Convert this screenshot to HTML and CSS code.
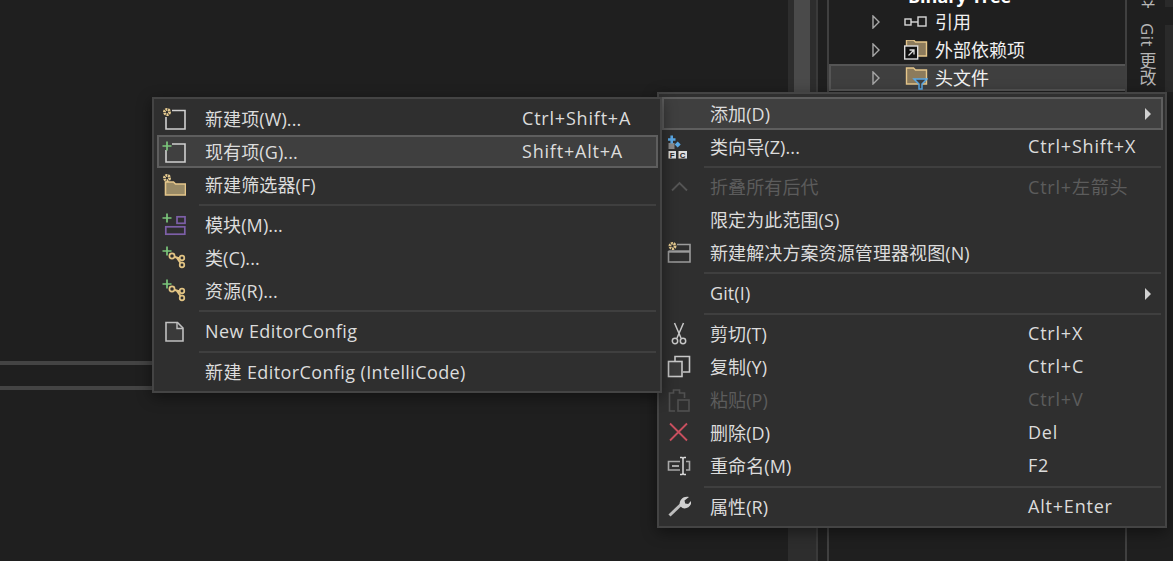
FILE: index.html
```html
<!DOCTYPE html>
<html lang="zh-CN">
<head>
<meta charset="utf-8">
<title>Menu</title>
<link rel="stylesheet" href="styles.css">
</head>
<body>
<div class="desk">
  <div class="editor"><div class="rule r1"></div><div class="rule r2"></div></div>
  <div class="scroll"><div class="thumb"></div></div>
  <div class="gutter"></div>
  <div class="tree">
    <div class="row top"><span class="tbox"></span><b>Binary Tree</b></div>
    <div class="row"><svg class="tw" viewBox="0 0 8 14"><path d="M1 1l6 6-6 6z" fill="none" stroke="#a8a8a8" stroke-width="1.400"/></svg><svg class="ti" viewBox="0 0 24 20"><rect x="1" y="7" width="6" height="6" fill="none" stroke="#d8d8d8" stroke-width="1.400"/><path d="M7 10h7" stroke="#d8d8d8" stroke-width="1.400"/><rect x="14" y="5" width="8" height="9" fill="none" stroke="#d8d8d8" stroke-width="1.400"/></svg><span class="tt">引用</span></div>
    <div class="row"><svg class="tw" viewBox="0 0 8 14"><path d="M1 1l6 6-6 6z" fill="none" stroke="#a8a8a8" stroke-width="1.400"/></svg><svg class="ti" viewBox="0 0 24 20"><path d="M2.500 0h7l2 2h11v14h-20z" fill="#8c7b5c" stroke="#e5c68a" stroke-width="1.400"/><rect x="0.700" y="6" width="13" height="13" fill="#111" stroke="#ddd" stroke-width="1.400"/><path d="M4.500 15.500l5-5M5.500 10h4.500v4.500" fill="none" stroke="#ddd" stroke-width="1.300"/></svg><span class="tt">外部依赖项</span></div>
    <div class="row sel"><svg class="tw" viewBox="0 0 8 14"><path d="M1 1l6 6-6 6z" fill="none" stroke="#a8a8a8" stroke-width="1.400"/></svg><svg class="ti tall" viewBox="0 0 24 24"><path d="M2.500 2h7l2 2h11v14h-20z" fill="#8c7b5c" stroke="#e5c68a" stroke-width="1.400"/><path d="M10 13h13l-5 5v5h-3v-5z" fill="#3f3f3f" stroke="#5aa9e6" stroke-width="1.500"/></svg><span class="tt">头文件</span></div>
  </div>
  <div class="side">
    <div class="vcol"><div class="vtab clip">关</div><div class="vtab">Git 更改</div></div>
    <div class="strip"></div>
  </div>
</div>

<div class="menu left-menu">
  <div class="item"><span class="ic"><svg viewBox="0 0 24 24"><path d="M10 3.500h13v18.500H4V10" fill="#2f2f2f" stroke="#d0d0d0" stroke-width="1.600"/><circle cx="5" cy="5" r="2.600" fill="#2f2f2f" stroke="#e6cb90" stroke-width="2.800" stroke-dasharray="1.900 .7"/></svg></span><span class="lb">新建项(W)...</span><span class="key">Ctrl+Shift+A</span></div>
  <div class="item hot"><span class="ic"><svg viewBox="0 0 24 24"><path d="M10 4h13v18H4V10" fill="#404040" stroke="#d0d0d0" stroke-width="1.600"/><path d="M.5 6h9M5 1.500v9" stroke="#7bc67b" stroke-width="1.700"/></svg></span><span class="lb">现有项(G)...</span><span class="key">Shift+Alt+A</span></div>
  <div class="item"><span class="ic"><svg viewBox="0 0 24 24"><path d="M3.500 9h8l2 2h10v11h-20z" fill="#998a66" stroke="#e5c68a" stroke-width="1.600"/><circle cx="5" cy="5" r="2.600" fill="#2f2f2f" stroke="#e6cb90" stroke-width="2.800" stroke-dasharray="1.900 .7"/></svg></span><span class="lb">新建筛选器(F)</span></div>
  <div class="sep"></div>
  <div class="item"><span class="ic"><svg viewBox="0 0 24 24"><rect x="3.800" y="13.800" width="19" height="7.400" fill="none" stroke="#7d5fa8" stroke-width="1.700"/><rect x="15" y="3.800" width="8" height="6.500" fill="none" stroke="#7d5fa8" stroke-width="1.700"/><path d="M.5 5h9M5 .5v9" stroke="#7bc67b" stroke-width="1.700"/></svg></span><span class="lb">模块(M)...</span></div>
  <div class="item"><span class="ic"><svg viewBox="0 0 24 24"><path d="M10 10l6 2h4M15 12l5 7" fill="none" stroke="#e3c584" stroke-width="2"/><circle cx="10" cy="10" r="2.600" fill="#2f2f2f" stroke="#e3c584" stroke-width="1.700"/><circle cx="20" cy="12" r="2.300" fill="#2f2f2f" stroke="#e3c584" stroke-width="1.700"/><circle cx="20" cy="19" r="2.300" fill="#2f2f2f" stroke="#e3c584" stroke-width="1.700"/><path d="M.5 5h9M5 .5v9" stroke="#7bc67b" stroke-width="1.700"/></svg></span><span class="lb">类(C)...</span></div>
  <div class="item"><span class="ic"><svg viewBox="0 0 24 24"><path d="M10 10l6 2h4M15 12l5 7" fill="none" stroke="#e3c584" stroke-width="2"/><circle cx="10" cy="10" r="2.600" fill="#2f2f2f" stroke="#e3c584" stroke-width="1.700"/><circle cx="20" cy="12" r="2.300" fill="#2f2f2f" stroke="#e3c584" stroke-width="1.700"/><circle cx="20" cy="19" r="2.300" fill="#2f2f2f" stroke="#e3c584" stroke-width="1.700"/><path d="M.5 5h9M5 .5v9" stroke="#7bc67b" stroke-width="1.700"/></svg></span><span class="lb">资源(R)...</span></div>
  <div class="sep"></div>
  <div class="item"><span class="ic"><svg viewBox="0 0 24 24"><path d="M4 2.500h11.500l5.500 5.500v13H4z" fill="#3a3a3a" stroke="#c0c0c0" stroke-width="1.600"/><path d="M15 2.500v6h6" fill="none" stroke="#c0c0c0" stroke-width="1.400"/></svg></span><span class="lb en">New EditorConfig</span></div>
  <div class="sep"></div>
  <div class="item"><span class="ic"></span><span class="lb en">新建 EditorConfig (IntelliCode)</span></div>
</div>

<div class="menu right-menu">
  <div class="item hot"><span class="ic"></span><span class="lb">添加(D)</span><span class="arrow"></span></div>
  <div class="item"><span class="ic"><svg viewBox="0 0 24 24"><rect x="1.500" y="8" width="6" height="6" fill="#8a8a8a"/><path d="M4.700 .5v8M1 4.500h7.500" stroke="#5aa9e6" stroke-width="2.600"/><path d="M10.700 6.500l3 3-3 3-3-3z" fill="#5aa9e6"/><rect x="1.500" y="16" width="7.500" height="7.500" fill="#ddd"/><rect x="11.500" y="16" width="8.500" height="7.500" fill="#ddd"/><text x="5.200" y="22.800" class="fc">F</text><text x="15.700" y="22.800" class="fc">C</text></svg></span><span class="lb">类向导(Z)...</span><span class="key">Ctrl+Shift+X</span></div>
  <div class="sep"></div>
  <div class="item off"><span class="ic"><svg viewBox="0 0 24 24"><path d="M5 15.500l7.500-7.500 7.500 7.500" fill="none" stroke="#555" stroke-width="1.800"/></svg></span><span class="lb">折叠所有后代</span><span class="key">Ctrl+左箭头</span></div>
  <div class="item"><span class="ic"></span><span class="lb">限定为此范围(S)</span></div>
  <div class="item"><span class="ic"><svg viewBox="0 0 24 24"><path d="M10 3.500h13v17.500H1.500V10" fill="#2f2f2f" stroke="#9c9c9c" stroke-width="1.600"/><path d="M1.500 10.500h21.500" stroke="#9c9c9c" stroke-width="2.400"/><circle cx="5.500" cy="5" r="2.600" fill="#2f2f2f" stroke="#e6cb90" stroke-width="2.800" stroke-dasharray="1.900 .7"/></svg></span><span class="lb">新建解决方案资源管理器视图(N)</span></div>
  <div class="sep"></div>
  <div class="item"><span class="ic"></span><span class="lb">Git(I)</span><span class="arrow"></span></div>
  <div class="sep"></div>
  <div class="item"><span class="ic"><svg viewBox="0 0 24 24"><path d="M7.500 1l6.500 15M16.500 1L10 16" fill="none" stroke="#c8c8c8" stroke-width="1.500"/><circle cx="8" cy="19" r="2.700" fill="none" stroke="#c8c8c8" stroke-width="1.500"/><circle cx="16" cy="19" r="2.700" fill="none" stroke="#c8c8c8" stroke-width="1.500"/></svg></span><span class="lb">剪切(T)</span><span class="key">Ctrl+X</span></div>
  <div class="item"><span class="ic"><svg viewBox="0 0 24 24"><path d="M8 6V1.500h14.500v15.500H16" fill="none" stroke="#c8c8c8" stroke-width="1.600"/><rect x="1.500" y="6.500" width="13.500" height="15" fill="#3c3c3c" stroke="#c8c8c8" stroke-width="1.600"/></svg></span><span class="lb">复制(Y)</span><span class="key">Ctrl+C</span></div>
  <div class="item off"><span class="ic"><svg viewBox="0 0 24 24"><path d="M8 23H2.500V5h4V2h6v3h5v5" fill="none" stroke="#505050" stroke-width="1.600"/><rect x="11" y="12" width="11" height="11" fill="none" stroke="#505050" stroke-width="1.600"/></svg></span><span class="lb">粘贴(P)</span><span class="key">Ctrl+V</span></div>
  <div class="item"><span class="ic"><svg viewBox="0 0 24 24"><path d="M3 2.500l17 17M20 2.500L3 19.500" stroke="#c8505f" stroke-width="1.800"/></svg></span><span class="lb">删除(D)</span><span class="key">Del</span></div>
  <div class="item"><span class="ic"><svg viewBox="0 0 24 24"><path d="M13 7.500H1.500v8.500H13" fill="none" stroke="#a8a8a8" stroke-width="1.600"/><path d="M19 7.500h3.500v8.500H19" fill="none" stroke="#a8a8a8" stroke-width="1.600"/><path d="M5 12h7" stroke="#a8a8a8" stroke-width="2"/><path d="M13 3.500h2l1 1 1-1h2M16 4.500v15M13 20.500h2l1-1 1 1h2" fill="none" stroke="#dcdcdc" stroke-width="1.500"/></svg></span><span class="lb">重命名(M)</span><span class="key">F2</span></div>
  <div class="sep"></div>
  <div class="item"><span class="ic"><svg viewBox="0 0 24 24"><path d="M2.500 20.500l11.500-11" stroke="#bdbdbd" stroke-width="3"/><path d="M13 11C11.500 6 15.500 .5 22 2l-4.500 3.500 .7 3 3 .5 3.300-3.500c.5 6-5 9-9 7.500z" fill="#d0d0d0"/></svg></span><span class="lb">属性(R)</span><span class="key">Alt+Enter</span></div>
</div>
</body>
</html>
```
FILE: styles.css
```css
* { box-sizing: border-box; }
html, body { margin: 0; height: 100%; overflow: hidden; background: #1f1f1f; }
body { font-family: "Open Sans", "Noto Sans CJK SC", sans-serif; font-size: 18px; color: #dcdcdc; }
.desk { display: flex; height: 561px; width: 1173px; }
.editor { width: 788px; flex: none; position: relative; }
.rule { position: absolute; left: 0; right: 0; height: 4px; background: #444; }
.r1 { top: 361px; }
.r2 { top: 386px; }
.scroll { width: 28px; flex: none; background: #2d2d2d; padding: 0 6px; }
.thumb { height: 500px; background: #4a4a4a; }
.gutter { width: 11px; flex: none; border-left: 2px solid #3a3a3a; }
.tree { width: 300px; flex: none; border-left: 2px solid #404040; border-right: 2px solid #404040; display: flex; flex-direction: column; margin-top: -20px; height: 581px; }
.row { height: 28px; display: flex; align-items: center; flex: none; color: #f0f0f0; }
.row.sel { background: #3f3f3f; border: 2px solid #555; border-right: 0; height: 27px; }
.row .tw { width: 8px; height: 14px; margin-left: 43px; flex: none; }
.row.sel .tw { margin-left: 41px; }
.row .ti { width: 24px; height: 20px; margin-left: 24px; flex: none; }
.row .ti.tall { height: 24px; }
.tt { margin-left: 7px; padding-bottom: 2px; }
.tbox { width: 21px; height: 12px; margin: 0 9px 4px 49px; border: 2px solid #c0c0c0; flex: none; align-self: center; }
.row b { color: #fff; margin-top: 4px; }
.side { flex: 1; display: flex; overflow: hidden; }
.vcol { width: 38px; flex: none; display: flex; flex-direction: column; align-items: center; padding-left: 2px; }
.vtab { writing-mode: vertical-rl; font-size: 17px; color: #b5b5b5; white-space: nowrap; letter-spacing: .4px; }
.vtab.clip { height: 8px; overflow: hidden; margin-bottom: 15px; }
.strip { width: 8px; height: 92px; background: linear-gradient(#2a2a2a 0 7px, transparent 7px 25px, #2a2a2a 25px); }
.menu { position: absolute; display: flex; flex-direction: column; width: 510px; background: #2f2f2f; border: 2px solid #444; padding: 3px 2px 2px 3px; box-shadow: 0 4px 14px rgba(0,0,0,.45); }
.left-menu { left: 152px; top: 97px; z-index: 2; }
.right-menu { left: 657px; top: 92px; z-index: 1; }
.item { height: 33px; flex: none; display: flex; align-items: center; position: relative; border: 2px solid transparent; }
.item.hot { background: #3f3f3f; border-color: #5e5e5e; }
.item.off { color: #5c5c5c; }
.ic { width: 24px; height: 24px; margin-left: 3px; flex: none; display: block; }
.ic svg { width: 24px; height: 24px; display: block; }
.fc { font: bold 8px "Liberation Sans", sans-serif; fill: #222; text-anchor: middle; }
.lb { margin-left: 19px; padding-bottom: 2px; white-space: nowrap; letter-spacing: .1px; }
.lb.en { letter-spacing: .4px; }
.key { position: absolute; left: 363px; top: 50%; transform: translateY(-55%); white-space: nowrap; letter-spacing: .8px; }
.right-menu .key { left: 364px; }
.arrow { position: absolute; right: 10px; top: 50%; margin-top: -6px; border-left: 6px solid #d0d0d0; border-top: 6px solid transparent; border-bottom: 6px solid transparent; }
.sep { height: 2px; margin: 2.830px 2px 2.830px 42px; background: #3f3f3f; flex: none; }
```
